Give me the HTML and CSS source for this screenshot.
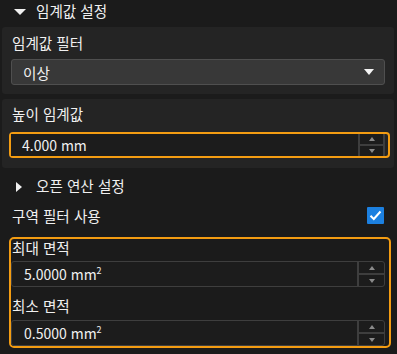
FILE: index.html
```html
<!DOCTYPE html>
<html lang="ko">
<head>
<meta charset="utf-8">
<link rel="stylesheet" href="styles.css">
</head>
<body>
<div class="page">
  <div class="section-header h1">
    <svg class="tri-down" width="12" height="6" viewBox="0 0 12 6"><path d="M0 0H12L6 6Z" fill="#f0f0f0"/></svg>
    <span class="ko">임계값 설정</span>
  </div>

  <div class="panel p1">
    <div class="label ko">임계값 필터</div>
    <div class="combo">
      <span class="ko">이상</span>
      <svg width="10" height="6" viewBox="0 0 10 6"><path d="M0 0H10L5 6Z" fill="#f4f4f4"/></svg>
    </div>
  </div>

  <div class="panel p2">
    <div class="label ko">높이 임계값</div>
    <div class="hl-single">
      <div class="spin-input">
        <span class="val">4.000 mm</span>
        <div class="spin">
          <div class="sb"><svg width="6" height="4" viewBox="0 0 6 4"><path d="M0 4L3 0L6 4Z" fill="#8a8a8a"/></svg></div>
          <div class="sb"><svg width="6" height="4" viewBox="0 0 6 4"><path d="M0 0H6L3 4Z" fill="#8a8a8a"/></svg></div>
        </div>
      </div>
    </div>
  </div>

  <div class="section-header h2">
    <svg class="tri-right" width="6" height="10" viewBox="0 0 6 10"><path d="M0 0L6 5L0 10Z" fill="#f0f0f0"/></svg>
    <span class="ko">오픈 연산 설정</span>
  </div>

  <div class="check-row">
    <span class="ko">구역 필터 사용</span>
    <div class="checkbox">
      <svg width="13" height="11" viewBox="0 0 13 11"><path d="M1.5 5.8L4.8 9L11.5 1.5" fill="none" stroke="#ffffff" stroke-width="2"/></svg>
    </div>
  </div>

  <div class="hl-box">
    <div class="label in-box ko">최대 면적</div>
    <div class="spin-input plain">
      <span class="val">5.0000 mm<sup>2</sup></span>
      <div class="spin">
        <div class="sb"><svg width="6" height="4" viewBox="0 0 6 4"><path d="M0 4L3 0L6 4Z" fill="#8a8a8a"/></svg></div>
        <div class="sb"><svg width="6" height="4" viewBox="0 0 6 4"><path d="M0 0H6L3 4Z" fill="#8a8a8a"/></svg></div>
      </div>
    </div>
    <div class="label in-box second ko">최소 면적</div>
    <div class="spin-input plain">
      <span class="val">0.5000 mm<sup>2</sup></span>
      <div class="spin">
        <div class="sb"><svg width="6" height="4" viewBox="0 0 6 4"><path d="M0 4L3 0L6 4Z" fill="#8a8a8a"/></svg></div>
        <div class="sb"><svg width="6" height="4" viewBox="0 0 6 4"><path d="M0 0H6L3 4Z" fill="#8a8a8a"/></svg></div>
      </div>
    </div>
  </div>
</div>
</body>
</html>
```

FILE: styles.css
```css
html, body {
  margin: 0;
  padding: 0;
  background: #1b1b1b;
}
body {
  width: 397px;
  height: 354px;
  overflow: hidden;
  font-family: "Noto Sans CJK KR", "Noto Sans", sans-serif;
  font-size: 14px;
  color: #f0f0f0;
}
.ko {
  font-size: 14.6px;
}
.page {
  display: flex;
  flex-direction: column;
}
.section-header {
  display: flex;
  align-items: center;
  line-height: 18px;
}
.h1 {
  height: 27px;
  padding-bottom: 6px;
  box-sizing: border-box;
  padding-left: 14px;
}
.h1 .tri-down {
  margin-right: 10px;
  margin-top: 2px;
}
.h2 {
  height: 34px;
  padding-top: 1px;
  box-sizing: border-box;
  padding-left: 16px;
}
.h2 .tri-right {
  margin-right: 14px;
  margin-top: 2px;
}
.panel {
  background: #242424;
  border-radius: 3px;
  margin: 0 3px 0 2px;
  box-sizing: border-box;
  padding-left: 9px;
  padding-right: 9px;
}
.p1 {
  height: 67px;
  padding-top: 7px;
}
.p2 {
  margin-top: 5px;
  height: 69px;
  padding-top: 6px;
}
.label {
  line-height: 18px;
  padding-left: 1px;
}
.p1 .label {
  height: 25px;
}
.p2 .label {
  height: 27px;
}
.combo {
  height: 26px;
  box-sizing: border-box;
  background: #383838;
  border: 1px solid #4f4f4f;
  border-radius: 3px;
  display: flex;
  align-items: center;
  justify-content: space-between;
  padding: 0 10px 0 11px;
}
.hl-single {
  height: 26px;
  box-sizing: border-box;
  border: 2px solid #f39c12;
  border-radius: 4px;
  margin-left: -2px;
  margin-right: -5px;
  padding-right: 3px;
}
.spin-input {
  height: 100%;
  box-sizing: border-box;
  display: flex;
  align-items: center;
  justify-content: space-between;
  background: #1c1c1c;
  padding-left: 11px;
}
.spin-input.plain {
  height: 26px;
  border: 1px solid #3e3e3e;
  border-radius: 3px;
  padding-left: 12px;
}
.val {
  line-height: 18px;
}
sup {
  font-size: 9px;
  line-height: 0;
  vertical-align: 6px;
}
.spin {
  width: 27px;
  height: 100%;
  box-sizing: border-box;
  border-left: 2px solid #3e3e3e;
  border-right: 2px solid #3e3e3e;
  display: flex;
  flex-direction: column;
}
.spin-input.plain .spin {
  border-right: none;
}
.sb {
  flex: 1;
  display: flex;
  align-items: center;
  justify-content: center;
}
.sb + .sb {
  border-top: 2px solid #3e3e3e;
}
.check-row {
  display: flex;
  align-items: center;
  justify-content: space-between;
  height: 35px;
  padding-left: 12px;
  padding-right: 13px;
  box-sizing: border-box;
  padding-bottom: 8px;
}
.checkbox {
  width: 17px;
  height: 17px;
  background: #1c80e0;
  border-radius: 1px;
  display: flex;
  align-items: center;
  justify-content: center;
}
.hl-box {
  margin: 0 6px 0 9px;
  border: 2px solid #f39c12;
  border-radius: 5px;
  height: 111px;
  box-sizing: border-box;
  padding-right: 4px;
}
.label.in-box {
  height: 22px;
  padding-left: 1px;
  line-height: 18px;
}
.label.in-box.second {
  height: 33px;
  padding-top: 10px;
  box-sizing: border-box;
}
```
